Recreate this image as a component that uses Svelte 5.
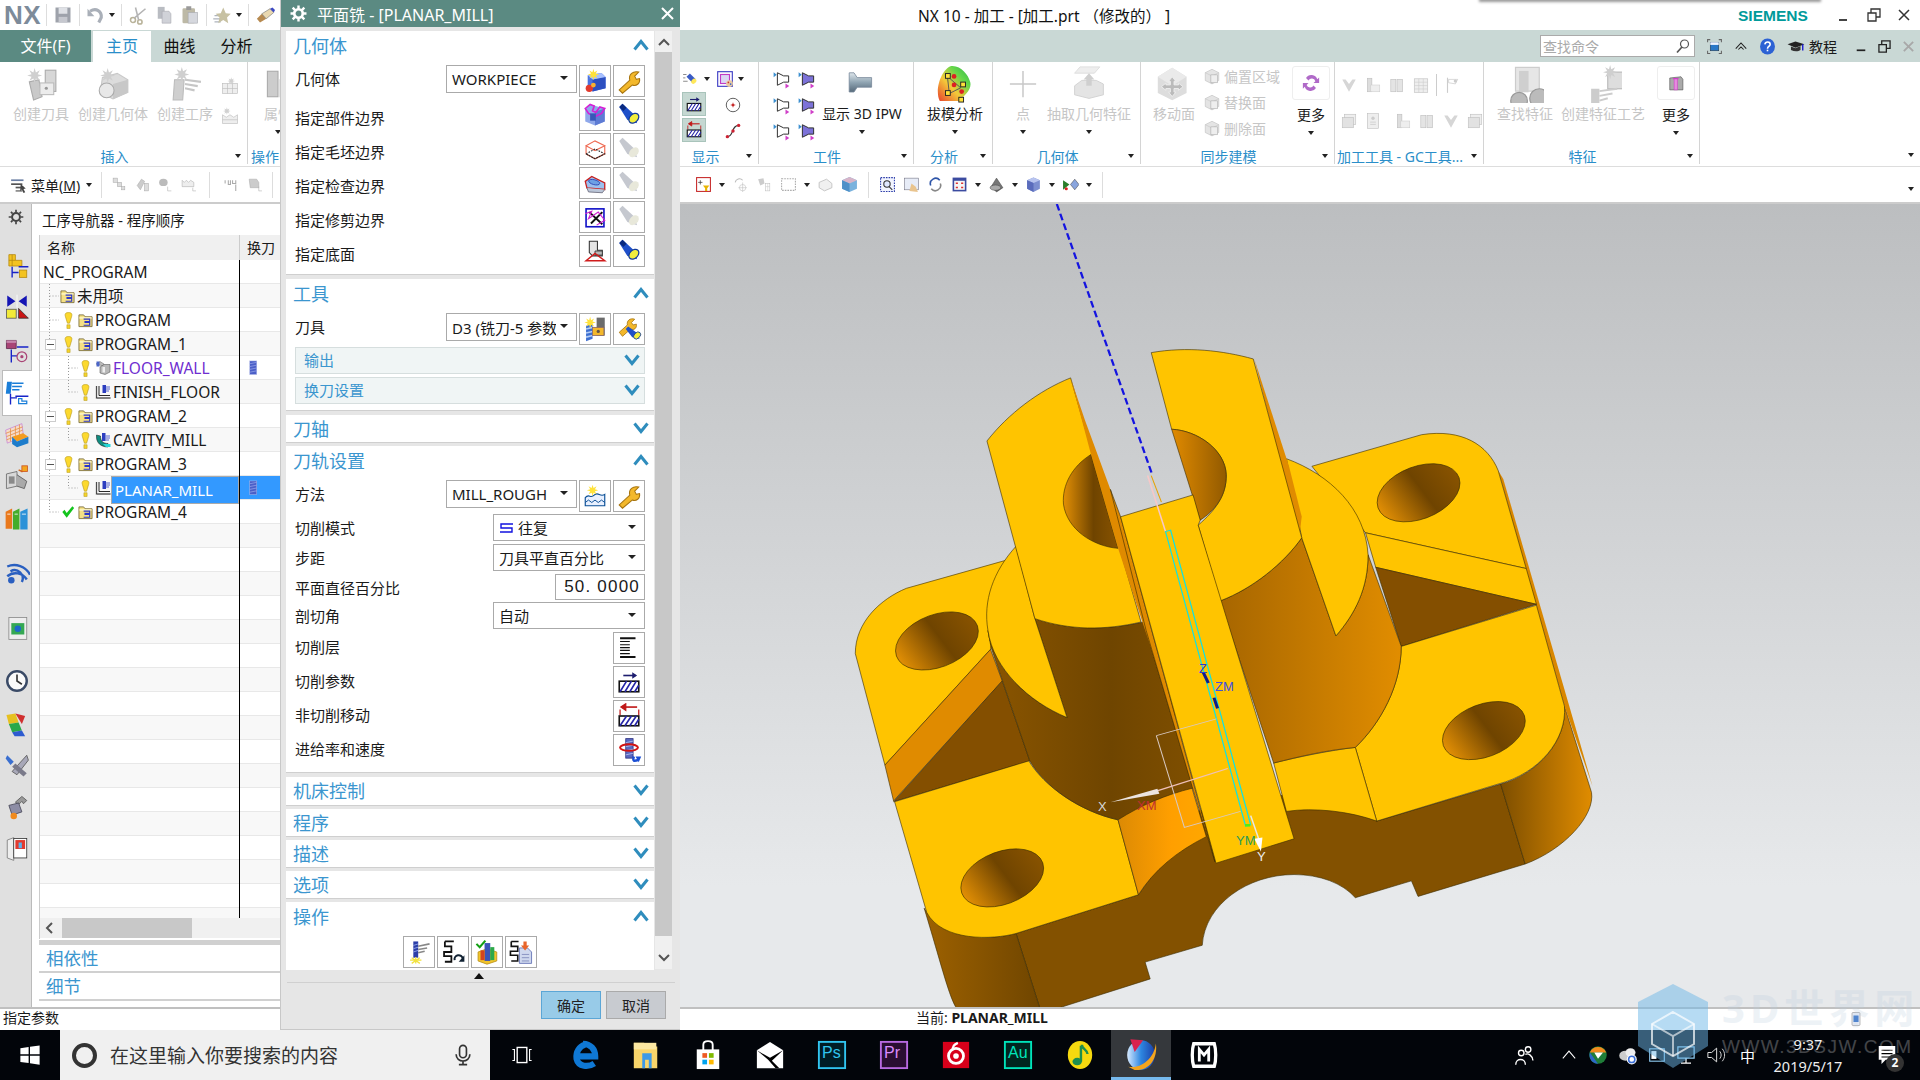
<script>
const star=(x,y,c='#ffe23a',r=5)=>{let p=[];for(let i=0;i<16;i++){const a=i*Math.PI/8,q=i%2?r*.45:r;p.push((x+q*Math.cos(a)).toFixed(1)+','+(y+q*Math.sin(a)).toFixed(1))}return `<polygon points="${p.join(' ')}" fill="${c}"/>`};
const gstar=(x,y)=>star(x,y,'#d0d0d0',6);
const I={
save:`<path d="M4 4H28V28H4Z" fill="#9ea2ab"/><rect x="9" y="4" width="14" height="10" fill="#dfe1e6"/><rect x="9" y="19" width="14" height="9" fill="#c6c8cf"/>`,
undo:`<path d="M8 10 C18 4 27 10 26 20 L22 28" fill="none" stroke="#a9afb8" stroke-width="5"/><path d="M4 6V18H15Z" fill="#a9afb8"/>`,
cut:`<circle cx="8" cy="24" r="4" fill="none" stroke="#b9b39a" stroke-width="2.5"/><circle cx="19" cy="27" r="3.5" fill="none" stroke="#b9b39a" stroke-width="2.5"/><path d="M10 21 L28 6 M17 24 L12 4" stroke="#b4b4b4" stroke-width="2.5"/>`,
copy:`<path d="M6 3H17V22H6Z" fill="#b9bcc2"/><path d="M13 10H24L27 14V29H13Z" fill="#d0d2d8" stroke="#a8aab0"/>`,
paste:`<rect x="4" y="5" width="20" height="24" rx="2" fill="#bdb9a6"/><rect x="10" y="2" width="8" height="6" fill="#9a9a9a"/><rect x="13" y="12" width="15" height="17" fill="#d6d8de" stroke="#a8aab0"/>`,
move:`<path d="M2 22H14M4 27H14M4 17H12" stroke="#aeb4bd" stroke-width="2"/><path d="M18 4 L22 13 L30 14 L24 20 L26 29 L18 24 L10 29 L12 20 L6 14 L14 13Z" fill="#c7c1a2"/>`,
pencil:`<path d="M3 22 L11 14 L18 22 L8 28Z" fill="#b78a50"/><path d="M11 14 L24 6 L30 12 L18 22Z" fill="#e9d8b0" stroke="#777"/><path d="M24 6 L30 12 L32 8 L28 4Z" fill="#3c49c2"/>`,
cTool:`<path d="M5 14 L14 12 L17 28 L9 31Z" fill="#c9c9c9" stroke="#aaa"/><rect x="20" y="3" width="10" height="20" fill="#d7d7d7" stroke="#aaa"/><rect x="15" y="15" width="13" height="11" fill="#ececec" stroke="#bbb"/><circle cx="21" cy="20" r="1.5" fill="#999"/>${star(10,8,'#cfcfcf',7)}`,
cGeom:`<path d="M6 10 L20 6 L30 12 V24 L16 30 L4 24Z" fill="#dcdcdc" stroke="#c8c8c8"/><path d="M16 30V16L30 12V24Z" fill="#c8c8c8"/><ellipse cx="10" cy="22" rx="7" ry="7" fill="#e8e8e8" stroke="#aaa"/>${star(11,8,'#cfcfcf',7)}`,
cOp:`<rect x="7" y="12" width="9" height="19" fill="#cfcfcf" stroke="#bbb" transform="skewX(-4)"/><path d="M16 12 L31 14 M16 16 L28 18 M16 20 L25 22" stroke="#c6c6c6" stroke-width="2"/>${star(13,7,'#cfcfcf',7)}`,
sm1:`<rect x="4" y="12" width="24" height="16" fill="#eee" stroke="#bbb"/><path d="M4 20H28M12 12V28M20 12V28" stroke="#bbb"/>${gstar(18,8)}`,
sm2:`<path d="M4 14 L10 18 L16 14 L22 18 L28 14 V28 H4Z" fill="#eee" stroke="#bbb"/><path d="M4 22H28" stroke="#bbb"/>${gstar(11,8)}`,
prop:`<rect x="6" y="4" width="10" height="24" fill="#ccc" stroke="#aaa"/><rect x="18" y="12" width="12" height="16" fill="#eee" stroke="#bbb"/>`,
menu:`<rect x="2" y="6" width="22" height="3" fill="#6a7ea3"/><rect x="2" y="13" width="20" height="3" fill="#555"/><rect x="10" y="19" width="14" height="3" fill="#555"/><rect x="10" y="25" width="12" height="3" fill="#888"/><path d="M19 14 L28 22 L24 23 L27 29 L24 30 L21 24 L18 27Z" fill="#444"/>`,
tb1:`<rect x="4" y="4" width="8" height="8" fill="#ddd" stroke="#aaa"/><rect x="12" y="12" width="8" height="8" fill="#ddd" stroke="#aaa"/><rect x="20" y="20" width="6" height="6" fill="#ddd" stroke="#aaa"/>`,
tb2:`<path d="M6 18 L14 6 L20 10 L12 26Z" fill="#ccc" stroke="#aaa"/><rect x="20" y="14" width="7" height="14" fill="#ddd" stroke="#aaa"/>`,
tb3:`<ellipse cx="12" cy="12" rx="8" ry="7" fill="#bbb"/><path d="M20 20V28H27" stroke="#aaa" fill="none"/>`,
tb4:`<path d="M4 8 L8 12 L12 8 L16 12 L20 8 L26 12 V20 H4Z" fill="#eee" stroke="#aaa"/><path d="M24 22V28H30" stroke="#aaa" fill="none"/>`,
tb5:`<path d="M4 8V14M10 8V16H14V8M18 8V14H24V8" stroke="#aaa" fill="none" stroke-width="2"/><path d="M24 16V28" stroke="#aaa" stroke-width="2"/>`,
tb6:`<path d="M6 6 H20 L24 12 V22 H8Z" fill="#ccc" stroke="#aaa"/><path d="M24 20V28H30" stroke="#aaa" fill="none"/>`,
torchS:`<path d="M14 6 L24 16 L18 22 L8 12Z" fill="#3a5bc4"/><ellipse cx="21" cy="20" rx="5" ry="4" fill="#ffe85a" transform="rotate(-45 21 20)"/><path d="M2 8H8M2 14H6M2 20H10" stroke="#333"/>`,
palette:`<rect x="3" y="3" width="26" height="26" fill="#fff" stroke="#3c3cc4" stroke-width="2"/><rect x="8" y="8" width="16" height="16" fill="#dcd7f5" stroke="#c23cc4" stroke-width="2"/><circle cx="24" cy="24" r="6" fill="#e9c9a0"/><circle cx="22" cy="22" r="1.5" fill="#c33"/><circle cx="26" cy="25" r="1.5" fill="#36c"/>`,
cutP:`<path d="M9 8H24" stroke="#1d1d6f" stroke-width="2"/><path d="M20 4 L26 8 L20 12Z" fill="#1d1d6f"/><rect x="4" y="15" width="24" height="13" fill="#fff" stroke="#111" stroke-width="2"/><path d="M5 28 L13 15 M11 28 L19 15 M17 28 L25 15 M23 28 L28 20" stroke="#2424a8" stroke-width="2"/>`,
nonCut:`<path d="M8 5H26" stroke="#c01818" stroke-width="2"/><path d="M12 1 L6 5 L12 9Z M5 8V15M28 8V15" fill="#c01818" stroke="#c01818" stroke-width="1.5"/><rect x="4" y="16" width="24" height="12" fill="#fff" stroke="#111" stroke-width="2"/><path d="M5 28 L13 16 M11 28 L19 16 M17 28 L25 16 M23 28 L28 20" stroke="#2424a8" stroke-width="2"/>`,
target:`<circle cx="16" cy="16" r="12" fill="#fff" stroke="#444" stroke-width="1.5"/><path d="M16 12V20M12 16H20" stroke="#c32020" stroke-width="1.5"/><circle cx="16" cy="16" r="2" fill="#c32020"/>`,
curve:`<path d="M6 26 C18 26 12 6 26 6" fill="none" stroke="#333" stroke-width="2"/><circle cx="6" cy="26" r="3" fill="#c23"/><circle cx="16" cy="16" r="3" fill="#c23"/><circle cx="26" cy="6" r="3" fill="#c23"/>`,
wp1:`<path d="M7 6 L17 11 H25 V21 H17 L7 26Z" fill="#fff" stroke="#333" stroke-width="1.6"/><path d="M1 5 L6 9 L1 13Z" fill="#3b8fd0"/><path d="M20 23 L26 27 L20 31Z" fill="#d040c8"/>`,
wp2:`<path d="M7 6 L17 11 H25 V21 H17 L7 26Z" fill="#7c72d8" stroke="#333" stroke-width="1.6"/><path d="M1 5 L6 9 L1 13Z" fill="#3b8fd0"/><path d="M20 23 L26 27 L20 31Z" fill="#d040c8"/>`,
ipw:`<path d="M4 6 L10 6 L14 12 H32 V24 H14 L10 30 H4Z" fill="url(#gs)" stroke="#789"/>`,
draft:`<path d="M16 1 C26 0 34 10 36 18 C38 26 30 32 24 38 H4 C-2 26 6 4 16 1Z" fill="url(#gd)"/><path d="M12 12 L26 24 L14 30Z" fill="none" stroke="#555"/><g fill="#ffe23a" stroke="#222"><rect x="10" y="9" width="5" height="5"/><rect x="26" y="18" width="5" height="5"/><rect x="10" y="27" width="5" height="5"/><rect x="24" y="34" width="5" height="5"/></g><circle cx="19" cy="12" r="2.5" fill="#d22"/><circle cx="19" cy="21" r="2.5" fill="#d22"/><circle cx="27" cy="28" r="2.5" fill="#d22"/>`,
plus:`<path d="M16 2V30M2 16H30" stroke="#c8c8c8" stroke-width="1.6"/>`,
extract:`<path d="M10 1 H32 L26 8 H4Z" fill="#eee" stroke="#ddd"/><path d="M4 22 L12 16 H28 L36 20 V32 L20 36 L4 32Z" fill="#e4e4e4" stroke="#d0d0d0"/><path d="M20 8 L26 15 H23 V22 H17 V15 H14Z" fill="#cfcfcf"/>`,
movef:`<path d="M18 2 L34 12 V30 L18 38 L2 30 V12Z" fill="#ddd"/><path d="M2 12 L18 22 L34 12 L18 2Z" fill="#eaeaea"/><path d="M18 12 L22 17 H20 V21 H25 V19 L30 23 L25 27 V25 H20 V29 H22 L18 34 L14 29 H16 V25 H11 V27 L6 23 L11 19 V21 H16 V17 H14Z" fill="#bbb" stroke="#eee"/>`,
gface:`<path d="M4 10 L16 4 L28 10 V24 L16 30 L4 24Z" fill="#e4e4e4" stroke="#bbb"/><path d="M4 10 L16 16 L28 10 M16 16V30" stroke="#c4c4c4" fill="none"/><rect x="14" y="14" width="12" height="14" fill="#eee" stroke="#aaa"/>`,
more1:`<path d="M8 8 A10 10 0 0 1 26 10 L29 7 V16 H20 L23 13 A6 6 0 0 0 12 12Z M24 24 A10 10 0 0 1 6 22 L3 25 V16 H12 L9 19 A6 6 0 0 0 20 20Z" fill="#b06ac8"/>`,
g1:`<path d="M4 6 L10 6 L16 14 L22 6 L28 6 L16 28Z" fill="#d6d6d6"/>`,
g2:`<rect x="6" y="4" width="8" height="24" fill="#ddd" stroke="#bbb"/><rect x="12" y="16" width="16" height="12" fill="#eee" stroke="#ccc"/>`,
g3:`<rect x="5" y="6" width="9" height="22" fill="#e4e4e4" stroke="#bbb"/><rect x="16" y="6" width="10" height="22" fill="#e4e4e4" stroke="#bbb"/>`,
g4:`<rect x="4" y="5" width="24" height="24" fill="#eee" stroke="#bbb"/><path d="M4 11H28M4 17H28M4 23H28M12 5V29M20 5V29" stroke="#ccc"/>`,
g5:`<path d="M8 3V30" stroke="#ccc" stroke-width="2"/><path d="M10 6 L26 6 L22 14 L10 12Z" fill="#fff" stroke="#bbb"/><circle cx="22" cy="9" r="3" fill="#ccc"/>`,
g6:`<rect x="8" y="4" width="20" height="18" fill="#eee" stroke="#bbb"/><rect x="4" y="10" width="20" height="18" fill="#e2e2e2" stroke="#bbb"/>`,
g7:`<rect x="6" y="3" width="20" height="26" fill="#eee" stroke="#bbb"/><circle cx="16" cy="11" r="3" fill="#ccc"/><path d="M11 18H21M11 22H21" stroke="#bbb"/>`,
find:`<rect x="8" y="2" width="20" height="20" fill="#e6e6e6" stroke="#ccc"/><rect x="11" y="5" width="8" height="18" fill="#cfcfcf"/><circle cx="11" cy="30" r="7" fill="#bbb" stroke="#999"/><circle cx="28" cy="28" r="8" fill="#bbb" stroke="#999"/>`,
cfeat:`<rect x="20" y="6" width="14" height="14" fill="#ddd" stroke="#bbb"/><rect x="6" y="20" width="7" height="16" fill="#ccc"/><path d="M13 22 L28 20 M13 26 L24 24 M13 30 L20 28" stroke="#ccc" stroke-width="1.6"/>${star(22,6,'#cfcfcf',6)}`,
more2:`<path d="M6 8 L24 6 L27 10 V27 H6Z" fill="#aaa" stroke="#555"/><rect x="13" y="9" width="5" height="18" fill="#e78be0" stroke="#d040c8"/><path d="M11 9H20" stroke="#d040c8" stroke-width="2"/>`,
rect1:`<rect x="3" y="3" width="26" height="26" fill="none" stroke="#c62828" stroke-width="2"/><path d="M10 8V16M6 12H14" stroke="#444" stroke-width="1.5"/><path d="M15 18H27L23 23V28H19V23Z" fill="#e8b400"/>`,
rot:`<path d="M6 12 A8 8 0 0 1 20 8" fill="none" stroke="#bbb" stroke-width="2"/><circle cx="20" cy="22" r="6" fill="none" stroke="#bbb"/><path d="M20 12V30M12 22H28" stroke="#bbb"/>`,
tg:`<path d="M4 6 L14 4 L16 14 L8 18Z" fill="#ccc"/><rect x="18" y="14" width="8" height="14" fill="none" stroke="#bbb"/><path d="M18 20H26M22 14V28" stroke="#ccc"/>`,
dash:`<rect x="3" y="5" width="26" height="22" fill="none" stroke="#aaa" stroke-width="2" stroke-dasharray="3 2"/>`,
cubeg:`<path d="M4 12 L18 6 L28 14 V22 L14 28 L4 22Z" fill="#f0f0f0" stroke="#bbb" stroke-width="1.5"/>`,
cubeb:`<path d="M16 2 L30 8 V24 L16 30 L2 24 V8Z" fill="#7ab2dd"/><path d="M2 8 L16 14 L30 8 L16 2Z" fill="#d7b4c8"/><path d="M16 14V30L2 24V8Z" fill="#4f90c8"/>`,
zoom:`<rect x="3" y="3" width="26" height="26" fill="#f2f5ff" stroke="#2a3ba8" stroke-dasharray="3 2" stroke-width="2"/><circle cx="15" cy="15" r="6" fill="#dfe8ff" stroke="#333" stroke-width="2"/><path d="M19 20 L25 26" stroke="#333" stroke-width="2"/>`,
hand:`<rect x="3" y="4" width="26" height="22" fill="#e7ecf7" stroke="#667"/><path d="M12 28 L16 14 L24 20 L28 30Z" fill="#e9c48e"/>`,
refr:`<path d="M7 18 A10 10 0 0 1 24 8" fill="none" stroke="#2e55a8" stroke-width="3"/><path d="M25 14 A10 10 0 0 1 8 24" fill="none" stroke="#888" stroke-width="3"/>`,
layout:`<rect x="3" y="3" width="26" height="26" fill="#3b4ba0"/><rect x="6" y="9" width="20" height="17" fill="#f5f5f5"/><path d="M9 12H13V15H9ZM19 12H23V15H19ZM9 20H13V23H9ZM19 20H23V23H19Z" fill="#d33"/>`,
tilt:`<path d="M6 20 L16 4 L28 22 L16 30Z" fill="#777" stroke="#333"/><ellipse cx="14" cy="22" rx="10" ry="5" fill="#aaa" stroke="#444"/>`,
cubef:`<path d="M16 3 L28 8 V24 L16 30 L4 24 V8Z" fill="#7d8fd0"/><path d="M4 8 L16 13 L28 8 L16 3Z" fill="#b8c4ef"/><path d="M16 13V30L4 24V8Z" fill="#5a6cbc"/>`,
snap:`<path d="M2 8 L14 16 L2 26Z" fill="#2a7d2a"/><path d="M16 16 L24 6 L32 16 L24 26Z" fill="#8aa5de" stroke="#444"/><circle cx="8" cy="24" r="3" fill="#d22"/>`,
geomNew:`<path d="M7 9 L24 6 L29 11 V25 L13 29 L7 24Z" fill="#4a72e0"/><path d="M13 14 L29 11 V25 L13 29Z" fill="#2c4fc0"/><path d="M7 9 L24 6 L29 11 L13 14Z" fill="#a8c0ff"/>${star(14,8,'#ffe23a',7)}<circle cx="9" cy="25" r="4.5" fill="#e13a2e"/><circle cx="14" cy="21" r="3" fill="#f6b030"/>`,
wrench:`<path d="M4 27 L17 15 C15 8 21 3 28 5 L23 10 L25 14 L29 13 C30 19 25 23 20 21 L8 31Z" fill="#f3b82b" stroke="#a8750f" stroke-width="1.3"/>`,
part:`<path d="M4 8 L10 3 L28 8 V24 L16 29 L4 24Z" fill="#8fa8ea"/><path d="M16 12 L28 8 V24 L16 29Z" fill="#5d7bd4"/><path d="M4 8 L10 3 L15 5 L13 11 L17 13 L22 6 L28 8 L24 14 L16 18 L8 14Z" fill="none" stroke="#d51fd5" stroke-width="2"/><rect x="10" y="14" width="7" height="9" fill="#3758b8"/>`,
torch:`<path d="M4 6 L8 2 L22 15 L26 26 L14 22Z" fill="#1e4fc9"/><path d="M4 6 L8 2 L13 7 L9 11Z" fill="#0a2a80"/><ellipse cx="22" cy="20" rx="7" ry="5" fill="#f2ee3c" stroke="#123a9a" stroke-width="1.5" transform="rotate(-45 22 20)"/>`,
torchg:`<path d="M4 6 L8 2 L22 15 L26 26 L14 22Z" fill="#c5c8cf"/><ellipse cx="22" cy="20" rx="7" ry="5" fill="#e8e8da" transform="rotate(-45 22 20)"/>`,
blank:`<path d="M5 12 L16 6 L28 12 L16 18Z M5 12V22L16 28L28 22V12" fill="#fff" stroke="#ef6a52" stroke-width="1.4"/><path d="M5 22 L16 16 L28 22 L16 28Z M5 22L16 28L28 22" fill="none" stroke="#222" stroke-width="1.3" stroke-dasharray="2 1.5"/>`,
check:`<path d="M4 14 L12 8 L28 16 L28 24 L6 22Z" fill="#9cc0ee" stroke="#c81f1f" stroke-width="1.6"/><ellipse cx="15" cy="15" rx="7" ry="3" fill="#6da0e5" stroke="#2940b0" transform="rotate(15 15 15)"/><path d="M6 22 L8 27 L25 28 L28 24" fill="#bbc6d8" stroke="#667"/>`,
trim:`<rect x="5" y="6" width="22" height="22" fill="none" stroke="#1212c8" stroke-width="2"/><path d="M9 10 L25 25 M25 10 L11 24" stroke="#111" stroke-width="2.4"/><path d="M4 12 L12 9 L8 18 L20 10 L28 20 L18 26" fill="none" stroke="#d01fd0" stroke-width="1.4"/>`,
floor:`<path d="M9 4 L19 4 V15 L25 15 V22 H13 L9 18Z" fill="#e4e4e4" stroke="#333" stroke-width="1.3"/><path d="M16 16 H25 V21 H16Z" fill="#b8b8b8" stroke="#333"/><path d="M5 28 H28 L16 19Z" fill="none" stroke="#d01c1c" stroke-width="1.8"/>`,
toolNew:`<path d="M5 12 L13 10 V28 L5 31Z" fill="#3d6fd0"/><path d="M5 16 L13 14M5 21L13 19M5 26L13 24" stroke="#b4cdf5" stroke-width="2"/><rect x="18" y="2" width="10" height="22" fill="#6b6b6b"/><rect x="13" y="14" width="14" height="10" fill="#f3b82b" stroke="#866"/><circle cx="20" cy="19" r="2" fill="#654"/>${star(10,8,'#ffe23a',7)}`,
wrTorch:`<path d="M4 20 L14 11 C13 6 17 2 23 4 L19 8 L21 11 L25 10 C26 15 22 18 18 16 L8 25Z" fill="#f3b82b" stroke="#a8750f"/><path d="M12 16 L15 13 L26 21 L29 28 L20 26Z" fill="#1e4fc9"/><ellipse cx="26" cy="24" rx="5" ry="3.5" fill="#f2ee3c" stroke="#123a9a" transform="rotate(-45 26 24)"/>`,
methNew:`<path d="M4 18 C9 12 10 20 15 15 C20 10 22 18 28 14 V28 H4Z" fill="#e8f0ff" stroke="#0a4f96" stroke-width="1.4"/><path d="M4 24 L8 21 L12 24 L16 21 L20 24 L24 21 L28 24" fill="none" stroke="#0a4f96" stroke-width="1.2"/>${star(13,9,'#ffe23a',7)}`,
levels:`<path d="M5 4H24M5 27H24" stroke="#111" stroke-width="2.4"/><path d="M5 8H17M5 12H17M5 15.500H17M5 19H17M5 23H17" stroke="#111" stroke-width="1.4"/>`,
feed:`<rect x="12" y="2" width="9" height="24" fill="#5a68c0" stroke="#2a2f80"/><path d="M12 7L21 5M12 12L21 10M12 17L21 15M12 22L21 20" stroke="#b9c4f0"/><ellipse cx="16" cy="13" rx="11" ry="4" fill="none" stroke="#d31414" stroke-width="2.5"/><path d="M22 24 C20 30 22 30 28 28" fill="none" stroke="#1c4fd4" stroke-width="3"/><path d="M24 24 H31 L28 31Z" fill="#1c4fd4"/>`,
op1:`<rect x="9" y="3" width="6" height="20" fill="#2c3ea8"/><path d="M9 8L15 6M9 12L15 10M9 16L15 14" stroke="#9fb3ee"/><path d="M15 9 L29 6 M15 13 L26 11 M15 17 L23 15" stroke="#888" stroke-width="2"/><path d="M5 26H19M12 22V30M7 30L17 23M17 30L7 23" stroke="#f2e23c" stroke-width="1.6"/>`,
op2:`<path d="M6 3H17M6 3V9H14V16H5V21H14V28H6" fill="none" stroke="#111" stroke-width="2.2"/><path d="M18 26 A5 5 0 0 1 28 24" fill="none" stroke="#123" stroke-width="2.5"/><path d="M30 20 V28 H23Z" fill="#123"/>`,
op3:`<path d="M5 16 L16 12 L28 16 V27 L16 31 L5 27Z" fill="#f2c42b" stroke="#b8901a"/><rect x="13" y="5" width="7" height="22" fill="#3a54b8"/><path d="M20 10H25V26H20Z" fill="#2ca84a"/><path d="M8 14V26H13V14Z" fill="#d3441f"/><path d="M3 6 L7 10 L14 2" fill="none" stroke="#14a014" stroke-width="2.6"/>`,
op4:`<path d="M4 3H13M4 3V9H12V15H3V20H12V27H4" fill="none" stroke="#111" stroke-width="2"/><path d="M14 11H24L29 16V30H14Z" fill="#cfd8ee" stroke="#5a6ab0"/><path d="M17 19H26M17 23H26M17 27H26" stroke="#7a85b8"/><path d="M19 3 H23 V8 H26 L21 14 L16 8 H19Z" fill="#e8642a"/>`,
bulb:`<path d="M16 1 C22 1 23 4 22 8 L18 21 H14 L10 8 C9 4 10 1 16 1Z" fill="#fcd92e" stroke="#b89a1e" stroke-width="1.2"/><path d="M13 24H19V31H13Z" fill="#f5d42a" stroke="#b89a1e"/>`,
okay:`<path d="M3 16 L8 11 L13 18 L26 3 L30 7 L13 29Z" fill="#14c41e"/>`,
folder:`<path d="M2 4H12L15 8H30V29H2Z" fill="#f5e084" stroke="#776a35" stroke-width="1.8"/><rect x="3" y="9" width="26" height="3" fill="#fdf6c9"/><path d="M12 13H25V18H15V20H25V26H12" fill="none" stroke="#2b35c9" stroke-width="2.4"/>`,
opfw:`<path d="M2 8 L10 3 L18 8 L16 12Z" fill="#bbb" stroke="#666"/><path d="M10 14 L18 9 H30 V24 L20 29 L10 26Z" fill="#b8b8b8" stroke="#444"/><rect x="15" y="14" width="5" height="11" fill="#eee"/><rect x="3" y="3" width="6" height="10" fill="#4a65c8"/>`,
opff:`<path d="M3 4V28H31" fill="none" stroke="#999" stroke-width="3"/><path d="M3 4V28H31" fill="none" stroke="#222" stroke-width="1.3"/><path d="M8 4V23H30" fill="none" stroke="#111" stroke-width="1.8"/><rect x="15" y="2" width="7" height="16" fill="#2c3ec0"/><path d="M22 6H30M22 10H30M22 14H28" stroke="#2c3ec0" stroke-width="1.6"/>`,
opcm:`<path d="M3 10 C3 22 12 30 26 30 V23 C16 23 11 18 11 8 L3 6Z" fill="#0f8c80" stroke="#111"/><rect x="14" y="2" width="7" height="16" fill="#2c3ec0"/><path d="M21 8H30M21 12H30M21 16H28" stroke="#2c3ec0" stroke-width="1.6"/><path d="M16 24H31V30H22Z" fill="#26d7d7"/>`,
mark:`<rect x="8" y="2" width="15" height="29" fill="#4b5fc8" stroke="#b4bde8"/><path d="M8 8L23 5M8 14L23 11M8 20L23 17M8 26L23 23" stroke="#9aa8ea" stroke-width="1.5"/>`,
gear:`<circle cx="16" cy="16" r="7" fill="none" stroke="#444" stroke-width="3.5"/><path d="M16 3V8M16 24V29M3 16H8M24 16H29M7 7L10 10M22 22L25 25M25 7L22 10M10 22L7 25" stroke="#444" stroke-width="3"/>`,
r1:`<path d="M6 2H14V9H22V16H6Z" fill="#f3c321" stroke="#b68a10"/><path d="M6 9H14M10 2V16" stroke="#b68a10"/><path d="M10 17V30M10 24H18M18 17H30" stroke="#1723c8" stroke-width="1.7"/><rect x="19" y="21" width="9" height="9" fill="#f3c321" stroke="#b68a10"/>`,
r2:`<path d="M4 3 L14 10 L4 17Z M28 3 L18 10 L28 17Z" fill="#1414b4"/><path d="M16 2V18" stroke="#fff"/><rect x="3" y="20" width="12" height="11" fill="#f2ea39" stroke="#555"/><path d="M18 19V31H30Z" fill="#c91414" stroke="#333"/>`,
r3:`<path d="M3 3H15V13H3Z" fill="#a94476" stroke="#5c2a4c"/><path d="M3 3H15V6H3Z" fill="#c787ad"/><path d="M9 14V30M9 22H16M16 11H30" stroke="#1723c8" stroke-width="1.7"/><circle cx="22" cy="23" r="6" fill="none" stroke="#a94476" stroke-width="1.5"/><circle cx="22" cy="23" r="2" fill="#a94476"/>`,
r4:`<rect x="4" y="2" width="6" height="15" fill="#1a7ed8" transform="skewX(-6)"/><path d="M10 4H24M10 8H22M10 12H19" stroke="#1a7ed8" stroke-width="1.7"/><path d="M8 17V30M8 22H16M14 20H30" stroke="#1723c8" stroke-width="1.7"/><path d="M18 29V23H22V26H28V29Z" fill="#fff" stroke="#1a7ed8" stroke-width="1.5"/>`,
r5:`<path d="M2 10 L22 2 L24 18 L4 26Z" fill="#f4dccb" stroke="#c98ad8"/><path d="M2 14 L23 6M3 18 L23 10M3 22L24 14M8 8V24M14 5V22M19 3V20" stroke="#e89045"/><path d="M10 18 L24 14 L30 18 L16 24Z" fill="#f39c1e"/><path d="M16 24 L30 18 V26 L16 31 L10 27 V18Z" fill="#1d7ccb"/>`,
r6:`<path d="M3 11 L16 8 V26 L3 29Z" fill="#d8d8d8" stroke="#666"/><rect x="6" y="14" width="7" height="9" fill="#8a8a8a"/><path d="M16 12 L28 20 L25 29 L16 26" fill="#aaa" stroke="#555"/><path d="M18 6 L22 8 L26 3" stroke="#d06a1e" stroke-width="2" fill="none"/><rect x="22" y="1" width="7" height="7" fill="#f3a51e" stroke="#c52"/>`,
r7:`<path d="M2 7 L10 3 V28 H2Z" fill="#e9791d"/><path d="M11 7 L19 3 V29 H11Z" fill="#45ad2b"/><path d="M20 7 L29 3 V29 H20Z" fill="#2c92d8"/><path d="M4 10H8M13 10H17M22 10H27" stroke="#fff"/>`,
r8:`<path d="M4 20 A16 16 0 0 1 28 24 M8 14 A10 10 0 0 1 22 27 M4 8 A22 22 0 0 1 32 18" fill="none" stroke="#2a5fc0" stroke-width="3"/><circle cx="9" cy="25" r="4" fill="#2a5fc0"/>`,
r9:`<rect x="6" y="3" width="22" height="27" fill="#eee" stroke="#888"/><rect x="9" y="10" width="16" height="14" fill="#34a853"/><circle cx="17" cy="17" r="4" fill="#1d68c9"/>`,
r10:`<circle cx="16" cy="16" r="12" fill="#fafafa" stroke="#3a4a66" stroke-width="3"/><path d="M16 8V16L22 20" stroke="#333" stroke-width="2" fill="none"/>`,
r11:`<path d="M3 5 L14 3 L18 14 L6 16Z" fill="#e6c020"/><path d="M6 16 L18 14 L22 24 L10 26Z" fill="#2aa84a"/><path d="M10 26 L22 24 L26 31 L13 31Z" fill="#2d5bd0"/><path d="M14 3 L26 6 L22 16Z" fill="#d03030"/>`,
r12:`<path d="M4 4 L12 12 L8 16 L2 8Z" fill="#3a6fd0"/><path d="M28 4 L10 24 L16 28 L30 10Z" fill="#a8a8b8" stroke="#555"/><path d="M14 14 L28 26 L24 30 L10 18Z" fill="#7a7a8a"/>`,
r13:`<path d="M22 3 L28 8 L24 12 L22 9 L18 13 L14 10Z" fill="#999" stroke="#555"/><path d="M6 14 L18 11 L22 22 L10 26Z" fill="#8d8da5" stroke="#445"/><circle cx="12" cy="27" r="4" fill="#f08a1e"/>`,
r14:`<path d="M4 5 L12 2 V30 L4 27Z" fill="#eee" stroke="#777"/><rect x="12" y="3" width="16" height="24" fill="#fff" stroke="#333"/><rect x="14" y="5" width="12" height="11" fill="#e23a2e"/><rect x="18" y="8" width="4" height="7" fill="#5ab0ea"/>`,
fs:`<path d="M3 8V3H8M24 3H29V8M29 24V29H24M8 29H3V24" fill="none" stroke="#666" stroke-width="2"/><rect x="8" y="8" width="16" height="16" fill="#2a78c8" stroke="#234"/><rect x="8" y="8" width="16" height="5" fill="#f0f4ff"/>`,
up:`<path d="M4 22 L16 9 L28 22 M10 24 L16 18 L22 24" fill="none" stroke="#222" stroke-width="2.4"/>`,
help:`<ellipse cx="16" cy="16" rx="14" ry="15" fill="#2c62d4"/><path d="M11 12 C12 6 21 6 21 12 C21 16 16 15 16 20" fill="none" stroke="#fff" stroke-width="3"/><rect x="14.500" y="22" width="3" height="3" fill="#fff"/>`,
hat:`<path d="M1 13 L15 8 L31 13 L15 19Z" fill="#222"/><path d="M7 17 V23 C13 26 20 26 24 23 V16 L15 20Z" fill="#333"/><path d="M28 13 V24" stroke="#1515d0" stroke-width="2.4"/>`,
search:`<circle cx="19" cy="12" r="8" fill="#fff" stroke="#555" stroke-width="2.4"/><path d="M14 18 L4 29" stroke="#555" stroke-width="3.500"/>`,
win:`<path d="M2 6 L14 4.500 V15 H2Z M16 4 L30 2 V15 H16Z M2 17H14V27.500 L2 26Z M16 17H30V30 L16 28Z" fill="#fff"/>`,
mic:`<rect x="11" y="2" width="10" height="18" rx="5" fill="none" stroke="#333" stroke-width="2.400"/><path d="M6 15 C6 28 26 28 26 15 M16 25V30M10 30H22" fill="none" stroke="#333" stroke-width="2.400"/>`,
task:`<rect x="9" y="5" width="14" height="22" fill="none" stroke="#fff" stroke-width="2"/><path d="M2 8H5V24H2M30 8H27V24H30" fill="none" stroke="#fff" stroke-width="1.6"/>`,
edge:`<path d="M9 17.500H28C28 10 23 4 15 4 M27 25C21 29 10 29 8 20 C7 13 11 7 17 5" fill="none" stroke="#0f78d4" stroke-width="6.500"/>`,
fldr:`<path d="M3 3H14L17 7H28V30H3Z" fill="#f8d56a"/><rect x="3" y="3" width="24" height="7" fill="#fce8a2"/><path d="M12 14 H22 V30 H19 V21 H15 V30 H12Z" fill="#3d9ae8"/>`,
store:`<path d="M4 10H28V31H4Z" fill="#fff"/><path d="M11 12 V5 C11 0 21 0 21 5 V12" fill="none" stroke="#fff" stroke-width="2"/><rect x="10" y="14" width="5" height="5" fill="#ee5a24"/><rect x="17" y="14" width="5" height="5" fill="#7fba00"/><rect x="10" y="21" width="5" height="5" fill="#00a4ef"/><rect x="17" y="21" width="5" height="5" fill="#ffb900"/>`,
mail:`<path d="M2 11 L16 2 L30 11 V30 H2Z" fill="#fff"/><path d="M2 11 L16 19 L30 11 L18 22 L26 30 H22 L14 21Z" fill="#000"/>`,
ps:`<rect x="2" y="2" width="28" height="28" fill="#001d26" stroke="#31c5f0" stroke-width="2"/>`,
pr:`<rect x="2" y="2" width="28" height="28" fill="#2a0e33" stroke="#b96ae2" stroke-width="2"/>`,
au:`<rect x="2" y="2" width="28" height="28" fill="#00251f" stroke="#00e4bb" stroke-width="2"/>`,
ne:`<rect x="2" y="2" width="28" height="28" fill="#d8001a"/><circle cx="16" cy="17" r="8" fill="none" stroke="#fff" stroke-width="3"/><circle cx="16" cy="17" r="3" fill="#fff"/><path d="M18 3 C13 5 12 8 13 11" fill="none" stroke="#fff" stroke-width="2.5"/>`,
qq:`<ellipse cx="16" cy="16" rx="13" ry="15" fill="#f6d90f"/><path d="M18 5 C18 10 24 10 24 15 M17 6V23" fill="none" stroke="#1e8e4e" stroke-width="2.600"/><ellipse cx="13" cy="23" rx="5" ry="4" fill="#1e8e4e"/>`,
nx:`<ellipse cx="16" cy="17" rx="13" ry="14" fill="url(#gn)"/><path d="M4 28 C14 30 28 22 30 6 C32 20 24 32 10 31Z" fill="#f3a51e"/><path d="M6 2 L18 3 L10 14Z" fill="#d9224e"/>`,
iq:`<path d="M5 4 H27 C29 10 29 22 27 28 H5 C3 22 3 10 5 4Z" fill="none" stroke="#fff" stroke-width="3.500"/><path d="M11 23 V10 L16 16 L21 10 V23" fill="none" stroke="#fff" stroke-width="3"/>`,
people:`<circle cx="12" cy="13" r="4" fill="none" stroke="#fff" stroke-width="2"/><path d="M4 30 C4 20 18 20 18 30" fill="none" stroke="#fff" stroke-width="2"/><circle cx="22" cy="8" r="4" fill="none" stroke="#fff" stroke-width="2"/><path d="M18 15 C22 13 28 16 29 24" fill="none" stroke="#fff" stroke-width="2"/>`,
chev:`<path d="M5 22 L16 9 L27 22" fill="none" stroke="#fff" stroke-width="1.800"/>`,
ball:`<circle cx="16" cy="16" r="14" fill="#1f7d38"/><path d="M3 12 A14 14 0 0 1 29 12Z" fill="#f08a1e"/><path d="M3 12 L16 30 A14 14 0 0 1 3 12Z" fill="#2c67c8"/><path d="M10 12H24L16 22Z" fill="#fff"/>`,
cloud:`<ellipse cx="12" cy="17" rx="10" ry="8" fill="#ccc"/><ellipse cx="20" cy="12" rx="8" ry="7" fill="#eee"/><circle cx="22" cy="23" r="8" fill="#fff"/><circle cx="22" cy="23" r="5" fill="none" stroke="#3b6fd8" stroke-width="2.500"/>`,
batt:`<rect x="3" y="5" width="26" height="22" fill="none" stroke="#8cc8ee" stroke-width="2"/><rect x="6" y="9" width="9" height="14" fill="#fff"/>`,
net:`<rect x="3" y="3" width="26" height="18" fill="none" stroke="#8cc8ee" stroke-width="2"/><path d="M16 21V28M8 29H24" stroke="#fff" stroke-width="2"/>`,
spk:`<path d="M3 12H9L17 5V27L9 20H3Z" fill="none" stroke="#ddd" stroke-width="1.600"/><path d="M22 10 C25 14 25 18 22 22 M26 6 C31 12 31 20 26 26" fill="none" stroke="#ddd" stroke-width="1.500"/>`,
note:`<path d="M4 3H28V23H14L8 29V23H4Z" fill="#fff"/><path d="M8 9H24M8 14H24M8 19H20" stroke="#000" stroke-width="1.500"/>`,
small:`<rect x="8" y="3" width="16" height="26" rx="2" fill="#e9eef8" stroke="#777"/><rect x="11" y="9" width="10" height="13" fill="#2d6ec9"/>`
};
const rows=[
{t:'NC_PROGRAM',p:2},
{t:'未用项',p:20,f:1},
{t:'PROGRAM',p:20,b:'bulb',f:1},
{t:'PROGRAM_1',p:20,b:'bulb',f:1,x:1},
{t:'FLOOR_WALL',p:37,b:'bulb',o:'opfw',c:'purple',m:1},
{t:'FINISH_FLOOR',p:37,b:'bulb',o:'opff'},
{t:'PROGRAM_2',p:20,b:'bulb',f:1,x:1},
{t:'CAVITY_MILL',p:37,b:'bulb',o:'opcm'},
{t:'PROGRAM_3',p:20,b:'bulb',f:1,x:1},
{t:'PLANAR_MILL',p:37,b:'bulb',o:'opff',s:1,m:1},
{t:'PROGRAM_4',p:20,b:'okay',f:1},
{},{},{},{},{},{},{},{},{},{},{},{},{},{},{},{},{},{}
];
const rail=['r1','r2','r3','r4','r5','r6','r7','r8','r9','r10','r11','r12','r13','r14'];
const railGaps=[24,14,19,6,6,17,15,28,29,27,17,15,16,16];
const boundRows=[['指定部件边界','part','torch'],['指定毛坯边界','blank','torchg'],['指定检查边界','check','torchg'],['指定修剪边界','trim','torchg'],['指定底面','floor','torch']];
const trayRows=[['切削层','levels'],['切削参数','cutP'],['非切削移动','nonCut'],['进给率和速度','feed']];
const taskApps=['task','edge','fldr','store','mail','ps','pr','ne','au','qq'];
</script>

{#snippet ic(n,s=22,w=0)}<svg class="ic" width={w||s} height={s} viewBox="0 0 {n==='ipw'||n==='draft'||n==='extract'||n==='movef'?'40 40':'32 32'}">{@html I[n]}</svg>{/snippet}
{#snippet caret(cls='')}<i class="caret {cls}"></i>{/snippet}
{#snippet big(n,label,w,dis,hasCaret=true,s=34)}
<div class="big" class:dis style="width:{w}px">
  <div class="bigic">{@render ic(n,s)}</div>
  <span class="biglab">{label}</span>
  {#if hasCaret}{@render caret()}{/if}
</div>
{/snippet}
{#snippet chev(up)}
<svg class="chev" width="16" height="12" viewBox="0 0 16 12"><path d={up?'M1.500 10.500 L8 2.500 L14.500 10.500':'M1.500 1.500 L8 9.500 L14.500 1.500'} fill="none" stroke="#2f8dbd" stroke-width="3"/></svg>
{/snippet}
{#snippet btn(n)}<button class="dbtn">{@render ic(n,26)}</button>{/snippet}

<div class="app">
<svg class="defs" width="0" height="0"><defs>
<linearGradient id="gs" x1="0" x2="0" y1="0" y2="1"><stop offset="0" stop-color="#dfe7ec"/><stop offset=".5" stop-color="#8fa4b2"/><stop offset="1" stop-color="#56697a"/></linearGradient>
<linearGradient id="gd" x1="0" x2="1" y1="1" y2="0"><stop offset="0" stop-color="#e8402c"/><stop offset=".4" stop-color="#f4c93a"/><stop offset=".7" stop-color="#63d74a"/><stop offset="1" stop-color="#2fb04a"/></linearGradient>
<linearGradient id="gn" x1="0" x2="1"><stop offset="0" stop-color="#d6e9ff"/><stop offset=".5" stop-color="#2d86e0"/><stop offset="1" stop-color="#1b3fa8"/></linearGradient>
<linearGradient id="hole"><stop offset="0" stop-color="#e28f05"/><stop offset=".55" stop-color="#6f4400"/><stop offset="1" stop-color="#885300"/></linearGradient>
<linearGradient id="cylL"><stop offset="0" stop-color="#8a5500"/><stop offset=".6" stop-color="#6f4500"/><stop offset="1" stop-color="#7f4f00"/></linearGradient>
<linearGradient id="cylR"><stop offset="0" stop-color="#a76600"/><stop offset="1" stop-color="#e18d00"/></linearGradient>
<linearGradient id="cor"><stop offset="0" stop-color="#7d4e00"/><stop offset="1" stop-color="#e08c00"/></linearGradient>
<linearGradient id="corL"><stop offset="0" stop-color="#9d6100"/><stop offset="1" stop-color="#6f4500"/></linearGradient>
<linearGradient id="curv"><stop offset="0" stop-color="#dc8a04"/><stop offset=".6" stop-color="#ff9f00"/><stop offset="1" stop-color="#ffa700"/></linearGradient>
<linearGradient id="hl"><stop offset="0" stop-color="#e08a00"/><stop offset="1" stop-color="#925a00"/></linearGradient>
</defs></svg>

<div class="window">
  <header class="titlebar">
    <span class="nx">NX</span>
    <div class="qat">
      <i class="tsep"></i>{@render ic('save',20)}<i class="tsep"></i>{@render ic('undo',20)}{@render caret('tc')}<i class="tsep"></i>{@render ic('cut',20)}{@render ic('copy',20)}{@render ic('paste',20)}<i class="tsep"></i>{@render ic('move',20)}{@render caret('tc')}<i class="tsep"></i>{@render ic('pencil',20)}<i class="tsep"></i>
    </div>
    <div class="wtitle">NX 10 - 加工 - [加工.prt （修改的） ]</div>
    <div class="siemens">SIEMENS</div>
    <div class="wctl">
      <svg width="14" height="14" viewBox="0 0 14 14"><path d="M2 12H10" stroke="#444" stroke-width="2"/></svg>
      <svg width="14" height="14" viewBox="0 0 14 14"><path d="M1 5H9V13H1ZM4 5V1H13V9H9" fill="none" stroke="#333" stroke-width="1.300"/></svg>
      <svg width="14" height="14" viewBox="0 0 14 14"><path d="M2 2L12 12M12 2L2 12" stroke="#333" stroke-width="1.500"/></svg>
    </div>
    <i class="topshadow"></i>
  </header>
  <nav class="tabs">
    <div class="tab file">文件(F)</div>
    <div class="tab home">主页</div>
    <div class="tab">曲线</div>
    <div class="tab">分析</div>
    <div class="tabfill"></div>
    <div class="cmdsearch"><span>查找命令</span>{@render ic('search',16)}</div>
    <div class="tabicons">
      {@render ic('fs',17)}{@render ic('up',14)}{@render ic('help',17)}{@render ic('hat',18)}<span class="tut">教程</span>
      <svg width="12" height="12" viewBox="0 0 14 14"><path d="M2 12H12" stroke="#222" stroke-width="2"/></svg>
      <svg width="13" height="13" viewBox="0 0 14 14"><path d="M1 5H9V13H1ZM4 5V1H13V9H9" fill="none" stroke="#222" stroke-width="1.400"/></svg>
      <svg width="13" height="13" viewBox="0 0 14 14"><path d="M2 2L12 12M12 2L2 12" stroke="#a8a8a8" stroke-width="2"/></svg>
    </div>
  </nav>
  <section class="ribbon">
    <div class="rg w248">
      <div class="rbody pl14">
        {@render big('cTool','创建刀具',56,true,false)}
        <div class="sp9"></div>
        {@render big('cGeom','创建几何体',70,true,false)}
        <div class="sp9"></div>
        {@render big('cOp','创建工序',56,true,false)}
        <div class="smcol pl6">{@render ic('sm1',20)}<div class="sp8h"></div>{@render ic('sm2',20)}</div>
      </div>
      <div class="rlab"><span>插入</span>{@render caret()}</div>
    </div>
    <div class="rg w432">
      <div class="rbody pl16">{@render big('prop','属性',28,true,true,34)}</div>
      <div class="rlab left"><span>操作</span></div>
    </div>
    <div class="rg w79">
      <div class="rbody">
        <div class="showgrid">
          <span class="cellc">{@render ic('torchS',18)}{@render caret()}</span><span class="cellc">{@render ic('palette',18)}{@render caret()}</span>
          <span class="hi">{@render ic('cutP',18)}</span><span class="cellc center">{@render ic('target',18)}</span>
          <span class="hi">{@render ic('nonCut',18)}</span><span class="cellc center">{@render ic('curve',18)}</span>
        </div>
      </div>
      <div class="rlab pr27"><span>显示</span>{@render caret()}</div>
    </div>
    <div class="rg w155">
      <div class="rbody">
        <div class="wp2col"><div class="smcol gap6">{@render ic('wp1',20)}{@render ic('wp1',20)}{@render ic('wp1',20)}</div><div class="smcol gap6">{@render ic('wp2',20)}{@render ic('wp2',20)}{@render ic('wp2',20)}</div></div>
        {@render big('ipw','显示 3D IPW',82,false,true,32)}
      </div>
      <div class="rlab"><span>工件</span>{@render caret()}</div>
    </div>
    <div class="rg w79">
      <div class="rbody cen">{@render big('draft','拔模分析',64,false,true,38)}</div>
      <div class="rlab"><span>分析</span>{@render caret()}</div>
    </div>
    <div class="rg w148">
      <div class="rbody">
        <div class="sp10"></div>{@render big('plus','点',40,true,true,30)}{@render big('extract','抽取几何特征',92,true,true,36)}
      </div>
      <div class="rlab"><span>几何体</span>{@render caret()}</div>
    </div>
    <div class="rg w194">
      <div class="rbody">
        <div class="sp10"></div>{@render big('movef','移动面',46,true,false,36)}
        <div class="smtxt">
          <div>{@render ic('gface',18)}<span>偏置区域</span></div>
          <div>{@render ic('gface',18)}<span>替换面</span></div>
          <div>{@render ic('gface',18)}<span>删除面</span></div>
        </div>
        <div class="morewrap">
          <div class="morebox">{@render ic('more1',20)}</div><span class="biglab">更多</span>{@render caret()}
        </div>
      </div>
      <div class="rlab"><span>同步建模</span>{@render caret()}</div>
    </div>
    <div class="rg w149">
      <div class="rbody gcb">
        <div class="gcrow">{@render ic('g1',18)}{@render ic('g2',18)}{@render ic('g3',18)}{@render ic('g4',18)}<i class="vs"></i>{@render ic('g5',18)}</div>
        <div class="gcrow">{@render ic('g6',18)}{@render ic('g7',18)}<i class="vs"></i>{@render ic('g2',18)}{@render ic('g3',18)}{@render ic('g1',18)}{@render ic('g6',18)}</div>
      </div>
      <div class="rlab"><span class="blt">加工工具 - GC工具...</span>{@render caret()}</div>
    </div>
    <div class="rg w216">
      <div class="rbody">
        <div class="sp13"></div>{@render big('find','查找特征',56,true,false,38)}<div class="sp8"></div>{@render big('cfeat','创建特征工艺',84,true,false,38)}
        <div class="morewrap m2">
          <div class="morebox">{@render ic('more2',20)}</div><span class="biglab">更多</span>{@render caret()}
        </div>
      </div>
      <div class="rlab"><span>特征</span>{@render caret()}</div>
    </div>
    <div class="rgend">{@render caret()}</div>
  </section>
  <section class="toolbar">
    <div class="tb tb1w">{@render ic('menu',18)}<span class="menut">菜单(<u>M</u>)</span>{@render caret()}<i class="tsep2"></i>
      {@render ic('tb1',17)}{@render ic('tb2',17)}{@render ic('tb3',17)}{@render ic('tb4',17)}<i class="tsep2 wide2"></i>{@render ic('tb5',17)}{@render ic('tb6',17)}<i class="tsep2"></i>
    </div>
    <div class="tb tb2w">
      {@render ic('rect1',17)}{@render caret()}{@render ic('rot',17)}{@render ic('tg',17)}{@render ic('dash',17)}{@render caret()}{@render ic('cubeg',17)}{@render ic('cubeb',17)}<i class="tsep2"></i>
      {@render ic('zoom',17)}{@render ic('hand',17)}{@render ic('refr',17)}{@render ic('layout',17)}{@render caret()}{@render ic('tilt',17)}{@render caret()}{@render ic('cubef',17)}{@render caret()}{@render ic('snap',17)}{@render caret()}<i class="tsep2"></i>
    </div>
    <div class="tbend">{@render caret()}</div>
  </section>
  <div class="main">
    <aside class="rail">
      <div class="railgear">{@render ic('gear',18)}</div>
      {#each rail as r,i}
        <div class="railitem" class:act={r==='r4'} style="margin-top:{railGaps[i]}px">{@render ic(r,26)}</div>
      {/each}
    </aside>
    <div class="nav">
      <div class="navhead">工序导航器 - 程序顺序</div>
      <div class="table">
        <div class="thead"><span class="th1">名称</span><span class="th2">换刀</span></div>
        <div class="tbody">
          {#each rows as r,i}
            <div class="row" class:alt={i%2===1}>
              <div class="c1" style="padding-left:{r.p||0}px">
                {#if r.x}<i class="exp"></i>{/if}
                {#if r.b}<span class="bl">{@render ic(r.b,r.b==='okay'?14:17)}</span>{/if}
                {#if r.f}{@render ic('folder',15)}{/if}
                {#if r.o}{@render ic(r.o,16)}{/if}
                {#if r.t}<span class="rt" class:purple={r.c} class:sel={r.s}>{r.t}</span>{/if}
              </div>
              <div class="c2" class:selb={r.s}>{#if r.m}{@render ic('mark',15)}{/if}</div>
            </div>
          {/each}
          <svg class="treelines" width="100" height="300" viewBox="0 0 100 300">
            <path d="M9.500 24V252H19 M9.500 36H19M9.500 60H19M28.500 96V132H38M28.500 108H38M28.500 168V180H38M28.500 216V228H38" fill="none" stroke="#999" stroke-dasharray="1 2"/>
          </svg>
        </div>
        <div class="hscroll"><svg width="10" height="12" viewBox="0 0 10 12"><path d="M7 1L2 6L7 11" fill="none" stroke="#555" stroke-width="2"/></svg><i class="thumb"></i></div>
      </div>
      <div class="pan first">相依性</div>
      <div class="pan last">细节</div>
    </div>
    <div class="view">
      <svg class="scene" viewBox="680 204 1240 803" preserveAspectRatio="none">
        <g transform="translate(840 340) scale(.5102 .4209)">
          <g stroke="#3b2c00" stroke-width="1.300">
            <path fill="#835100" d="M345 1410L395 1600L608 1518L598 1478L710 1438C715 1340 800 1270 890 1270C940 1270 985 1290 1010 1325L1120 1285L1133 1322L1343 1245L1295 1055L1052 1143L960 1060L700 1120L585 1318Z"/>
            <path fill="url(#corL)" d="M165 1350C200 1430 300 1425 345 1410L395 1600H235C215 1570 205 1510 165 1350Z"/>
            <path fill="url(#cor)" d="M1295 1055C1370 1030 1425 950 1420 870L1473 1075C1480 1130 1420 1210 1343 1245Z"/>
            <path fill="#d98700" stroke="none" d="M1290 310L1300 330L1475 1060L1420 870Z"/>
            <path fill="#ffc400" d="M925 300L1140 225C1220 210 1270 250 1290 310L1345 543L1030 458Z"/>
            <path fill="#ffc400" d="M1030 458L1345 543L1365 628L1050 540Z"/>
            <path fill="#844f00" d="M1050 540L1365 628L1100 728Z"/>
            <path fill="#ffc400" d="M30 745C30 670 80 615 130 590L335 520L295 735L88 1010Z"/>
            <path fill="#e08b00" d="M88 1010L295 735L318 810L105 1095Z"/>
            <path fill="#844f00" d="M105 1097L318 810L372 1000Z"/>
            <path fill="#ffc400" d="M107 1097L370 1000C400 1060 470 1120 545 1140L585 1318L345 1410C300 1425 200 1430 170 1360Z"/>
            <path fill="#ffc400" d="M1100 728L1365 630L1420 870C1425 950 1370 1030 1290 1055L1052 1143L1010 968C1060 910 1100 820 1100 728Z"/>
            <path fill="#ffc400" d="M850 1005C900 990 960 975 1010 968L1052 1143C1000 1120 930 1110 875 1120Z"/>
            <ellipse cx="190" cy="715" rx="88" ry="60" fill="url(#hole)" transform="rotate(-32 190 715)"/>
            <ellipse cx="318" cy="1278" rx="88" ry="60" fill="url(#hole)" transform="rotate(-32 318 1278)"/>
            <ellipse cx="1134" cy="363" rx="88" ry="60" fill="url(#hole)" transform="rotate(-32 1134 363)"/>
            <ellipse cx="1262" cy="928" rx="88" ry="60" fill="url(#hole)" transform="rotate(-32 1262 928)"/>
            <path fill="url(#cylL)" d="M296 730L372 1000C400 1060 470 1120 545 1140L692 1065L595 670C520 690 450 690 382 662L445 897C370 860 300 780 290 690Z"/>
            <path fill="url(#curv)" d="M545 1140C590 1105 640 1080 690 1065L718 1180C660 1215 615 1260 585 1318Z"/>
            <path fill="url(#cylR)" d="M745 620C810 590 870 530 905 470L972 703C1010 650 1035 590 1035 510L1100 728C1100 820 1060 910 1010 968C950 975 900 990 850 1005Z"/>
            <path fill="#ffc400" d="M875 282C960 320 1030 400 1035 510C1035 590 1010 650 972 703L905 470Z"/>
            <path fill="#e08b00" stroke="none" d="M812 45L880 300L905 420L900 470Z"/>
            <path fill="#ffc400" d="M610 30C680 15 750 25 810 45L905 470C870 530 810 590 745 620L702 440C735 405 758 370 757 320C755 260 700 215 650 212Z"/>
            <path fill="url(#hl)" d="M650 212C700 215 755 260 757 320C758 370 735 405 706 428Z"/>
            <path fill="#ffc400" d="M345 490C300 550 280 620 290 690C300 780 370 860 445 897L382 662Z"/>
            <path fill="#ffc400" d="M288 240C330 175 390 120 452 90L590 670C520 690 450 690 382 662Z"/>
            <path fill="url(#hole)" d="M492 272C455 300 435 345 438 390C445 450 495 490 545 495Z"/>
            <path fill="#df8a00" stroke="none" d="M452 90L480 190L530 355L600 660L660 900L650 880L590 660L545 495L492 272Z"/>
            <path fill="#df8a00" d="M530 355L550 420L735 1240L720 1180L690 1060L600 690Z"/>
            <path fill="#ffc400" d="M550 420L692 368L706 428L702 440L890 1185L737 1243Z"/>
          </g>
          <path d="M425 -323L612 320" stroke="#1414e0" stroke-width="4.500" stroke-dasharray="16 8" fill="none"/>
          <path d="M603 322L638 455" stroke="#f8c8c8" stroke-width="3" fill="none"/>
          <path d="M610 322L630 385" stroke="#e8a000" stroke-width="2" fill="none"/>
          <path d="M638 455L795 1155L805 1152L648 452Z" stroke="#14e0e0" stroke-width="2.500" fill="none"/>
          <path d="M712 790L722 815M733 850L740 875" stroke="#111a88" stroke-width="6"/>
          <path d="M620 940L738 900M620 940L675 1158L785 1120" stroke="#d8c8c0" stroke-width="2" fill="none"/>
          <path d="M760 1018L620 1072" stroke="#efc0b8" stroke-width="3"/><path d="M622 1066L530 1098L626 1078Z" fill="#ece4e0"/>
          <path d="M805 1130L822 1190" stroke="#e8e8e8" stroke-width="3"/><path d="M812 1185L825 1215L828 1182Z" fill="#fff"/>
          <rect x="794" y="1150" width="10" height="6" fill="#50f010"/>
        </g>
        <g class="csys">
          <text x="1199" y="673" fill="#2a3ad0">Z</text>
          <text x="1215" y="691" fill="#4050e0">ZM</text>
          <text x="1137" y="810" fill="#c03030">XM</text>
          <text x="1098" y="811" fill="#d8d8d8">X</text>
          <text x="1236" y="845" fill="#2a9a5a">YM</text>
          <text x="1257" y="861" fill="#eee">Y</text>
        </g>
      </svg>
    </div>
  </div>
  <footer class="status">
    <span class="st1">指定参数</span>
    <span class="st2">当前: <b>PLANAR_MILL</b></span>
    <span class="st3">{@render ic('small',16)}</span>
  </footer>
</div>

<div class="taskbar">
  <div class="winb">{@render ic('win',22)}</div>
  <div class="tsearch">
    <i class="cortana"></i>
    <span>在这里输入你要搜索的内容</span>
    {@render ic('mic',22)}
  </div>
  <div class="apps">
    {#each taskApps as a}
      <div class="app-i">
        {#if a==='task'}{@render ic(a,22)}{:else}{@render ic(a,30)}{/if}
        {#if a==='ps'}<b class="lt ps">Ps</b>{/if}
        {#if a==='pr'}<b class="lt pr">Pr</b>{/if}
        {#if a==='au'}<b class="lt au">Au</b>{/if}
      </div>
    {/each}
    <div class="app-i active">{@render ic('nx',34)}</div>
    <div class="app-i">{@render ic('iq',30)}</div>
  </div>
  <div class="tray">
    {@render ic('people',22)}
    <div class="tgap"></div>
    {@render ic('chev',18)}{@render ic('ball',20)}{@render ic('cloud',20)}{@render ic('batt',18)}{@render ic('net',20)}{@render ic('spk',20)}
    <span class="zh">中</span>
    <div class="clock"><span>9:37</span><span>2019/5/17</span></div>
    <div class="notif">{@render ic('note',22)}<b>2</b></div>
  </div>
</div>

<aside class="dialog">
  <div class="dtitle">
    <svg class="dgear" width="17" height="17" viewBox="0 0 32 32"><circle cx="16" cy="16" r="8" fill="none" stroke="#fff" stroke-width="5"/><path d="M16 1V8M16 24V31M1 16H8M24 16H31M5 5L10 10M22 22L27 27M27 5L22 10M10 22L5 27" stroke="#fff" stroke-width="4.500"/></svg>
    <span>平面铣 - [PLANAR_MILL]</span>
    <svg class="dclose" width="13" height="13" viewBox="0 0 13 13"><path d="M1 1L12 12M12 1L1 12" stroke="#fff" stroke-width="2"/></svg>
  </div>
  <div class="dmain">
    <div class="dpanel">
      <section class="sec s1">
        <div class="shead"><span>几何体</span>{@render chev(true)}</div>
        <div class="drow"><span class="lab">几何体</span><div class="sel nar">WORKPIECE<i class="caret bk"></i></div>{@render btn('geomNew')}{@render btn('wrench')}</div>
        {#each boundRows as b}
          <div class="drow"><span class="lab low">{b[0]}</span>{@render btn(b[1])}{@render btn(b[2])}</div>
        {/each}
      </section>
      <section class="sec s2">
        <div class="shead"><span>工具</span>{@render chev(true)}</div>
        <div class="drow"><span class="lab">刀具</span><div class="sel nar"><span class="clip">D3 (铣刀-5 参数</span><i class="caret bk"></i></div>{@render btn('toolNew')}{@render btn('wrTorch')}</div>
        <div class="sub"><span>输出</span>{@render chev(false)}</div>
        <div class="sub"><span>换刀设置</span>{@render chev(false)}</div>
      </section>
      <section class="sec col"><div class="shead"><span>刀轴</span>{@render chev(false)}</div></section>
      <section class="sec s4">
        <div class="shead"><span>刀轨设置</span>{@render chev(true)}</div>
        <div class="drow"><span class="lab">方法</span><div class="sel nar">MILL_ROUGH<i class="caret bk"></i></div>{@render btn('methNew')}{@render btn('wrench')}</div>
        <div class="drow f"><span class="lab">切削模式</span><div class="sel wide"><svg class="zig" width="13" height="10" viewBox="0 0 13 10"><path d="M13 1H1V5H12V9H0" fill="none" stroke="#1212e0" stroke-width="1.400"/></svg><span class="ind">往复</span><i class="caret bk"></i></div></div>
        <div class="drow f"><span class="lab">步距</span><div class="sel wide">刀具平直百分比<i class="caret bk"></i></div></div>
        <div class="drow f h26"><span class="lab">平面直径百分比</span><div class="inp">50. 0000</div></div>
        <div class="drow f"><span class="lab">剖切角</span><div class="sel wide">自动<i class="caret bk"></i></div></div>
        {#each trayRows as t}
          <div class="drow"><span class="lab mid">{t[0]}</span>{@render btn(t[1])}</div>
        {/each}
      </section>
      <section class="sec col h28"><div class="shead"><span>机床控制</span>{@render chev(false)}</div></section>
      <section class="sec col"><div class="shead"><span>程序</span>{@render chev(false)}</div></section>
      <section class="sec col"><div class="shead"><span>描述</span>{@render chev(false)}</div></section>
      <section class="sec col"><div class="shead"><span>选项</span>{@render chev(false)}</div></section>
      <section class="sec s9">
        <div class="shead"><span>操作</span>{@render chev(true)}</div>
        <div class="oprow">{@render btn('op1')}{@render btn('op2')}{@render btn('op3')}{@render btn('op4')}</div>
      </section>
    </div>
    <div class="dscroll">
      <div class="sbtn top"><svg width="12" height="8" viewBox="0 0 12 8"><path d="M1 7L6 2L11 7" fill="none" stroke="#555" stroke-width="2"/></svg></div>
      <div class="strack"></div>
      <div class="sbtn bot"><svg width="12" height="8" viewBox="0 0 12 8"><path d="M1 1L6 6L11 1" fill="none" stroke="#555" stroke-width="2"/></svg></div>
    </div>
  </div>
  <div class="dtri"><i></i></div>
  <div class="dfoot"><button class="ok">确定</button><button class="cancel">取消</button></div>
</aside>

<div class="watermark">
  <svg width="74" height="84" viewBox="0 0 74 84"><path d="M37 0L72 18V62L37 84L2 62V18Z" fill="#6db8e8" opacity=".5"/><path d="M37 28L58 40V60L37 72L16 60V40Z" fill="none" stroke="#fff" stroke-width="2" opacity=".7"/><path d="M16 40L37 52L58 40M37 52V72" fill="none" stroke="#fff" stroke-width="2" opacity=".6"/></svg>
  <div class="wmt"><span class="w1">3D世界网</span><span class="w2">WWW.3DSJW.COM</span></div>
</div>
</div>

<style>
:global(body){margin:0;background:#fff;overflow:hidden}
.app{width:1920px;height:1080px;position:relative;overflow:hidden;font-family:"Noto Sans","Noto Sans CJK SC",sans-serif;font-size:15px;color:#1a1a1a;display:flex;flex-direction:column}
.defs{position:absolute}
.ic{display:block;flex:none}
i{display:block}
.caret{width:0;height:0;border:3.5px solid transparent;border-top:4px solid #222;border-bottom:0;flex:none}
.window{height:1030px;display:flex;flex-direction:column;flex:none}
.titlebar{height:30px;display:flex;align-items:center;position:relative;background:#fff;flex:none}
.nx{font:700 26px "Liberation Sans",sans-serif;color:#7d8b9a;margin-left:4px;width:42px;letter-spacing:.5px}
.qat{display:flex;align-items:center;gap:6px;width:235px}
.tsep{width:1px;height:22px;background:#ddd}
.tc{margin-left:-2px}
.wtitle{position:absolute;left:918px;font-size:15.500px;color:#111;top:4px}
.siemens{position:absolute;left:1738px;top:7px;font:700 15.500px "Liberation Sans",sans-serif;color:#009a9a}
.wctl{margin-left:auto;display:flex;gap:16px;padding-right:9px}
.topshadow{position:absolute;left:1480px;width:340px;top:-3px;height:3px;box-shadow:0 1px 3px 1px #999}
.tabs{height:32px;background:#c9d8d5;display:flex;flex:none;align-items:stretch}
.tab{width:57px;text-align:center;font-size:16px;line-height:32px;color:#111}
.tab.file{width:91px;background:#5b8a82;color:#fff;margin-right:2px}
.tab.home{width:58px;background:#fff;color:#2a8ec9;margin-top:1px;line-height:30px}
.tabfill{flex:1}
.cmdsearch{width:155px;height:22px;margin-top:5px;background:#fff;border:1px solid #aaa;display:flex;align-items:center;justify-content:space-between;padding:0 3px 0 2px;box-sizing:border-box;color:#aaa;font-size:14px}
.tabicons{width:225px;display:flex;align-items:center;padding-left:11px;gap:11px;box-sizing:border-box}
.tut{font-size:14px;margin-left:-7px;margin-right:7px}
.ribbon{height:105px;display:flex;flex:none;background:#fff;border-bottom:1px solid #ddd;box-sizing:border-box;position:relative}
.rg{display:flex;flex-direction:column;border-right:1px solid #d4d4d4;box-sizing:border-box;height:102px;flex:none}
.w248{width:248px}.w432{width:432px}.w79{width:79px}.w155{width:155px}.w148{width:148px}.w194{width:194px}.w149{width:149px}.w216{width:216px}
.rbody{height:86px;display:flex;padding-top:4px;box-sizing:border-box}
.pl14{padding-left:13px}.pl16{padding-left:16px}.cen{justify-content:center;padding-left:4px}
.sp9{width:9px;flex:none}.sp8{width:8px;flex:none}.sp10{width:10px;flex:none}.sp13{width:13px;flex:none}.sp8h{height:10px}
.pl6{margin-left:7px;padding-top:10px}
.big{display:flex;flex-direction:column;align-items:center;flex:none}
.bigic{height:36px;display:flex;align-items:center}
.biglab{font-size:14px;line-height:20px;margin-top:2px;white-space:nowrap}
.big .caret,.morewrap .caret{margin-top:6px}
.dis .biglab{color:#c6c6c6}
.rlab{height:16px;display:flex;align-items:center;justify-content:center;position:relative;color:#2a8ec9;font-size:14px;padding-right:18px;white-space:nowrap}
.rlab.left{justify-content:flex-start;padding-left:3px}
.rlab.pr27{padding-right:27px}
.rlab .caret{position:absolute;right:6px;top:6px}
.blt{font-size:14px}
.smcol{display:flex;flex-direction:column;flex:none}
.gap6{gap:6px;padding-top:3px}
.wp2col{display:flex;gap:5px;padding-left:14px;width:62px;box-sizing:border-box;flex:none}
.showgrid{display:grid;grid-template-columns:34px 36px;grid-auto-rows:26px;padding-left:2px}
.cellc{display:flex;align-items:center;gap:4px}
.cellc.center{padding-left:8px}
.hi{width:24px;height:24px;background:#c5d8d2;border:1px solid #a9c4bb;box-sizing:border-box;display:flex;align-items:center;justify-content:center}
.smtxt{display:flex;flex-direction:column;gap:8px;padding-top:1px;width:76px;flex:none;margin-left:6px}
.smtxt div{display:flex;gap:3px;align-items:center;color:#c6c6c6;font-size:14px;height:18px;white-space:nowrap}
.morewrap{display:flex;flex-direction:column;align-items:center;width:40px;margin-left:12px;flex:none}
.m2{margin-left:11px}
.morebox{width:38px;height:34px;border:1px solid #eee;border-radius:3px;display:flex;align-items:center;justify-content:center;box-sizing:border-box;margin-bottom:3px}
.gcb{flex-direction:column;gap:14px;padding:12px 0 0 5px}
.gcrow{display:flex;gap:6px;align-items:center}
.vs{width:1px;height:22px;background:#ccc}
.rgend{flex:1;position:relative}
.rgend .caret{position:absolute;right:6px;top:91px}
.toolbar{height:37px;display:flex;align-items:center;flex:none;background:#fff;border-bottom:2px solid #ccc;box-sizing:border-box}
.tb{display:flex;align-items:center;flex:none;gap:6px}
.tb1w{width:680px;padding-left:10px;box-sizing:border-box}
.tb2w{padding-left:15px;gap:7px}
.menut{font-size:14px;margin-left:-3px}
.tsep2{width:1px;height:26px;background:#ddd;margin:0 3px}
.tsep2.wide2{margin:0 7px 0 6px}
.tbend{flex:1;display:flex;justify-content:flex-end;padding:8px 6px 0 0}
.main{flex:1;display:flex;min-height:0}
.rail{width:32px;background:#e0e0e0;border-right:1px solid #bbb;box-sizing:border-box;flex:none;display:flex;flex-direction:column;align-items:center}
.railgear{height:24px;display:flex;align-items:center;margin-top:1px;flex:none}
.railitem{width:30px;height:26px;display:flex;justify-content:center;align-items:center;margin-left:2px;flex:none}
.railitem.act{background:#fff;border:1px solid #bbb;border-right:0;height:46px;box-sizing:border-box}
.nav{width:648px;background:#fff;display:flex;flex-direction:column;flex:none;box-sizing:border-box;border-right:1px solid #ccc}
.navhead{height:31px;padding:0 10px;line-height:32px;font-size:14.500px}
.table{height:704px;margin-left:7px;border-left:1px solid #ccc;display:flex;flex-direction:column}
.thead{height:25px;display:flex;background:#f0f0f0;font-size:14px;line-height:25px;flex:none}
.th1{width:200px;padding-left:7px;box-sizing:border-box;border-right:1px solid #ccc}
.th2{padding-left:7px}
.tbody{height:658px;overflow:hidden;position:relative;background:#fff}
.row{height:24px;display:flex;border-bottom:1px solid #e8e8e8;box-sizing:border-box}
.row.alt{background:#f8f8f8}
.c1{width:200px;flex:none;display:flex;align-items:center;box-sizing:border-box;height:24px;border-right:1px solid #000;gap:1px;position:relative}
.c2{width:42px;display:flex;align-items:center;padding-left:6px;box-sizing:border-box}
.selb{background:#3399ff}
.exp{position:absolute;left:5px;top:7px;width:9px;height:9px;border:1px solid #ccc;background:linear-gradient(#555,#555) center/7px 1px no-repeat #fff;z-index:1}
.bl{width:16px;display:flex;justify-content:center;margin-right:1px;flex:none}
.rt{font-size:15.500px;padding:1px 1px 0 1px;line-height:23px;white-space:nowrap}
.rt.sel{background:#3399ff;color:#fff;align-self:stretch;flex:1;padding-left:3px;margin-left:-1px}
.purple{color:#6f2ed0}
.treelines{position:absolute;left:0;top:0;pointer-events:none;z-index:0}
.hscroll{height:20px;background:#f0f0f0;display:flex;align-items:center;padding-left:5px;flex:none}
.thumb{width:130px;height:20px;background:#c8c8c8;margin-left:7px}
.pan{margin-left:7px;height:26px;color:#3b96cf;font-size:17.500px;line-height:26px;padding-left:7px;border-top:2px solid #d0d0d0}
.pan.first{border-top:5px solid #d0d0d0;margin-top:1px}
.pan.last{border-bottom:2px solid #d0d0d0}
.view{flex:1;background:linear-gradient(#bcbec0,#e7e9eb 85%);min-width:0}
.scene{display:block;width:100%;height:100%}
.csys text{font:13px "Liberation Sans",sans-serif}
.status{height:23px;background:#fff;border-top:2px solid #c0c0c0;box-sizing:border-box;display:flex;align-items:center;font-size:14px;position:relative;flex:none;padding-bottom:5px}
.st1{margin-left:3px;width:913px}
.st2 b{font-weight:700}
.st3{position:absolute;left:1848px;top:2px}
.taskbar{height:50px;background:#02050a;display:flex;align-items:center;flex:none;color:#fff}
.winb{width:60px;display:flex;justify-content:center}
.tsearch{width:430px;height:50px;background:#f0f0f0;display:flex;align-items:center;color:#333;font-size:19px;box-sizing:border-box;padding-left:12px}
.cortana{width:17px;height:17px;border:4px solid #333;border-radius:50%;margin-right:13px;flex:none}
.tsearch span{width:342px;white-space:nowrap;flex:none}
.apps{display:flex;height:50px;padding-left:1px}
.app-i{width:62px;height:50px;display:flex;align-items:center;justify-content:center;position:relative;box-sizing:border-box;flex:none}
.app-i.active{background:#35383c;border-bottom:3px solid #76b9ed;width:60px;margin-right:2px}
.lt{position:absolute;left:21px;top:14px;font:400 16px "Liberation Sans",sans-serif}
.ps{color:#31c5f0}.pr{color:#d98bff}.au{color:#00e4bb}
.tray{margin-left:auto;display:flex;align-items:center;gap:10px;padding-right:22px;height:50px}
.tgap{width:5px}
.zh{font-size:15px;margin-left:4px;margin-right:-2px}
.clock{display:flex;flex-direction:column;align-items:center;font-size:14.500px;line-height:22px;width:90px;color:#eee}
.notif{position:relative;margin-left:13px}
.notif b{position:absolute;left:10px;top:10px;width:18px;height:18px;border-radius:50%;background:#333;text-align:center;font-size:12px;line-height:18px}
.dialog{position:absolute;left:280px;top:0;width:400px;height:1030px;background:#e6e6e6;border-left:1px solid #c8c8c8;border-bottom:1px solid #c8c8c8;box-sizing:border-box;display:flex;flex-direction:column}
.dtitle{height:27px;background:#5b8a82;color:#fff;display:flex;align-items:center;font-size:16px;flex:none;position:relative}
.dgear{margin:0 10px 0 9px}
.dclose{position:absolute;right:6px;top:7px}
.dmain{display:flex;padding:4px 8px 0 5px;height:942px;box-sizing:border-box;flex:none}
.dpanel{width:368px;display:flex;flex-direction:column;gap:4px;flex:none}
.sec{background:#fff;border-bottom:1px solid #cfcfcf;box-sizing:border-box;position:relative;flex:none}
.sec.col{height:27px;border-bottom:0;box-shadow:0 1px 0 #cfcfcf}
.sec.h28{height:28px}
.s1{height:244px}.s2{height:132px}.s4{height:327px}.s9{height:68px;border-bottom:0}
.shead{height:34px;display:flex;align-items:center;justify-content:space-between;padding:0 5px 6px 7px;box-sizing:border-box;font-size:18px;color:#3b96cf}
.sec.col .shead{height:27px;padding-bottom:2px}
.drow{display:flex;height:32px;margin-bottom:2px;padding:0 9px;align-items:flex-start;gap:2px;justify-content:flex-end}
.drow.f{height:27px;margin-bottom:3px}
.drow.h26{height:26px;margin-bottom:2px}
.lab{margin-right:auto;font-size:15px;line-height:28px}
.lab.low{line-height:38px}
.lab.mid{line-height:31px}
.sel{height:28px;border:1px solid #aaa;box-sizing:border-box;display:flex;align-items:center;padding-left:5px;position:relative;white-space:nowrap;font-size:15px;background:#fff}
.sel.nar{width:131px}
.sel.wide{width:152px;height:27px}
.clip{width:104px;overflow:hidden}
.bk{position:absolute;right:8px;top:10px;border-width:4px}
.ind{margin-left:5px}
.zig{margin-left:1px}
.inp{width:90px;height:26px;border:1px solid #aaa;box-sizing:border-box;text-align:right;padding-right:4px;font-size:17px;line-height:24px;letter-spacing:1.200px;font-family:"Liberation Sans",sans-serif}
.dbtn{width:32px;height:32px;padding:0;border:1px solid #aaa;background:#fff;display:flex;align-items:center;justify-content:center;box-sizing:border-box;flex:none}
.sub{margin:2px 9px 3px;height:27px;background:#f0f5f5;border:1px solid #d6dede;box-sizing:border-box;display:flex;align-items:center;justify-content:space-between;padding:0 4px 2px 8px;color:#3b96cf;font-size:15px}
.sub + .sub{margin-top:3px}
.oprow{display:flex;justify-content:center;gap:2px}
.dscroll{width:17px;margin-left:1px;display:flex;flex-direction:column;flex:none}
.sbtn{height:21px;background:#f0f0f0;display:flex;justify-content:center;align-items:center}
.strack{flex:1;background:#c8c8c8}
.sbtn.bot{height:33px;padding-top:10px;box-sizing:border-box}
.dtri{height:13px;display:flex;justify-content:center;align-items:center;border-bottom:1px solid #d0d0d0;margin:0 5px 0 6px;flex:none}
.dtri i{width:0;height:0;border:5px solid transparent;border-bottom:6px solid #111;border-top:0;margin-left:-5px}
.dfoot{display:flex;justify-content:flex-end;gap:5px;padding:8px 14px 0 0}
.dfoot button{width:60px;height:28px;font:14px "Noto Sans","Noto Sans CJK SC",sans-serif;border:1px solid #aaa;background:#c8cbd0;color:#222;padding:0}
.dfoot .ok{background:#98cbe8;border-color:#5ba6d6}
.watermark{position:absolute;left:1636px;top:984px;display:flex;gap:12px;pointer-events:none}
.wmt{display:flex;flex-direction:column;color:#fff;opacity:.25}
.w1{font:700 40px "Noto Sans","Noto Sans CJK SC",sans-serif;line-height:48px;letter-spacing:5px;color:#bcd}
.w2{font:400 19px "Liberation Sans",sans-serif;letter-spacing:1.500px;margin-top:4px}
</style>
